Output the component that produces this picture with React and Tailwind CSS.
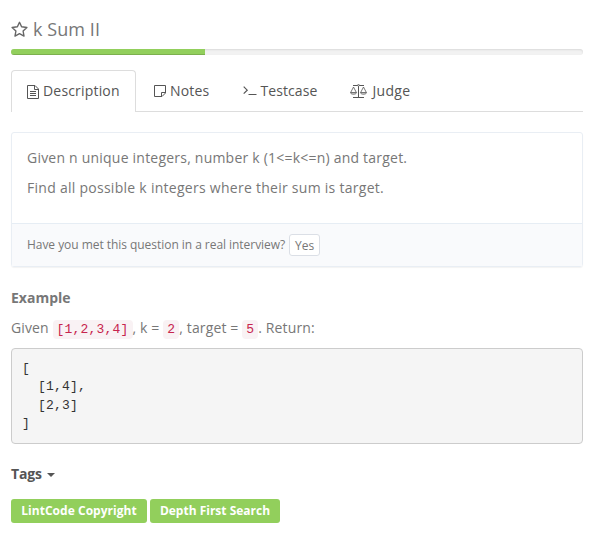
import React from "react";

function StarIcon() {
  return (
    <svg className="h-[17px] w-[17px] shrink-0 text-[#666]" viewBox="0 0 17 17" fill="none" stroke="currentColor" strokeWidth="1.4" strokeLinejoin="round">
      <path d="M8.5 1.3 10.6 5.8 15.9 6.5 12.1 10 13 15.1 8.5 12.7 4 15.1 4.9 10 1.1 6.5 6.4 5.8Z" />
    </svg>
  );
}

function FileIcon() {
  return (
    <svg className="mt-0.5 h-[14px] w-3 shrink-0" viewBox="0 0 12 14" fill="none" stroke="currentColor">
      <path d="M.5.5H8L11.5 4V13.5H.5ZM7.5.5V4.5H11.5M3 6.5H9M3 8.5H9M3 10.5H9" />
    </svg>
  );
}

function NoteIcon() {
  return (
    <svg className="h-3 w-3 shrink-0" viewBox="0 0 12 12" fill="none" stroke="currentColor">
      <path d="M.5.5H11.5V8L8 11.5H.5ZM11.5 7.5H7.5V11.5" />
    </svg>
  );
}

function TerminalIcon() {
  return (
    <svg className="h-[11px] w-[14px] shrink-0" viewBox="0 0 14 11" fill="none" stroke="currentColor">
      <path d="M.7 1.7 4.2 5.2.7 8.7" strokeWidth="1.2" />
      <path d="M5.5 9.5H13.5" />
    </svg>
  );
}

function ScaleIcon() {
  return (
    <svg className="mt-px h-[14px] w-[17px] shrink-0" viewBox="0 0 17 14" fill="none" stroke="currentColor" strokeWidth=".8">
      <path d="M3 1.5H14M8.5 2V13.5M3 13.5H14" strokeWidth="1" />
      <circle cx="8.5" cy="1.3" r=".9" fill="white" />
      <path d="M3.5 3 .8 8.2M3.5 3 6.2 8.2M13.5 3 10.8 8.2M13.5 3 16.2 8.2" />
      <path d="M.4 8.5H6.6C6.3 10.8.7 10.8.4 8.5ZM10.4 8.5H16.6C16.3 10.8 10.7 10.8 10.4 8.5Z" fill="currentColor" fillOpacity=".25" />
    </svg>
  );
}

function Code({ children }) {
  return (
    <code className="rounded bg-[#f9f2f4] px-1 py-0.5 font-['Liberation_Mono',monospace] text-[13px] tracking-[0.2px] text-[#c7254e]">
      {children}
    </code>
  );
}

export default function App() {
  return (
    <main className="flex h-[540px] w-[595px] flex-col overflow-hidden bg-white pr-3 pl-[11px] font-['Open_Sans',sans-serif] text-sm text-[#777]">
      <h1 className="mt-[17px] flex h-6 items-center gap-[5px] text-lg leading-6 tracking-[0.08px]">
        <StarIcon />
        <span>k Sum II</span>
      </h1>
      <div className="mt-2 h-1.5 shrink-0 overflow-hidden rounded-[3px] bg-[#f2f2f2] shadow-[inset_0_1px_2px_rgba(0,0,0,0.1)]">
        <div className="h-full w-[194px] bg-[#92cf5c] shadow-[inset_0_-1px_0_rgba(0,0,0,0.15)]" />
      </div>

      <nav className="mt-[15px] flex h-[42px] shrink-0 border-b border-[#ddd] tracking-[0.18px] text-[#555]">
        <div className="-mb-px flex w-[125px] items-center gap-1 rounded-t border border-b-0 border-[#ddd] bg-white pb-0.5 pl-[15px]">
          <FileIcon />
          <span>Description</span>
        </div>
        <div className="ml-[18px] flex items-center gap-1">
          <NoteIcon />
          <span>Notes</span>
        </div>
        <div className="ml-[34px] flex items-center gap-[3px]">
          <TerminalIcon />
          <span className="tracking-[0.1px]">Testcase</span>
        </div>
        <div className="ml-[33px] flex items-center gap-[5px]">
          <ScaleIcon />
          <span className="tracking-[0.3px]">Judge</span>
        </div>
      </nav>

      <section className="mt-5 flex h-[135px] shrink-0 flex-col rounded-[3px] border border-[#e9eef4] shadow-[0_1px_1px_rgba(0,0,0,0.05)]">
        <div className="h-[90px] px-[15px] pt-[15px] leading-5">
          <p className="mb-2.5 tracking-[0.215px]">Given n unique integers, number k (1&lt;=k&lt;=n) and target.</p>
          <p className="tracking-[0.27px]">Find all possible k integers where their sum is target.</p>
        </div>
        <footer className="flex flex-1 items-center gap-1 border-t border-[#e6edf4] bg-[#f9fafc] px-[15px] text-xs">
          <span className="tracking-[-0.045px]">Have you met this question in a real interview?</span>
          <button className="h-[22px] w-[31px] rounded-[3px] border border-[#dbdfe6] bg-white pt-px text-center text-xs leading-5">Yes</button>
        </footer>
      </section>

      <h2 className="mt-[21px] h-5 font-bold leading-5">Example</h2>
      <p className="mt-2.5 h-5 leading-5 tracking-[0.13px]">
        Given <Code>[1,2,3,4]</Code>, k = <Code>2</Code>, target = <Code>5</Code>. Return:
      </p>
      <pre className="mt-2.5 h-24 shrink-0 rounded border border-[#ccc] bg-[#f5f5f5] px-[10px] pt-[10.5px] font-['Liberation_Mono',monospace] text-[13px] leading-[18.5px] tracking-[0.2px] text-[#333]">{`[
  [1,4],
  [2,3]
]`}</pre>

      <h2 className="mt-5 flex h-5 items-center font-bold leading-5 text-[#555]">
        <span className="tracking-[-0.15px]">Tags</span>
        <svg className="ml-[5px] mt-0.5 h-1 w-2" viewBox="0 0 8 4" fill="currentColor"><path d="M0 0H8L4 4Z" /></svg>
      </h2>
      <div className="mt-[15px] flex h-6 gap-[3px] text-xs font-bold leading-6 text-white">
        <span className="w-[136px] rounded-[3px] bg-[#92cf5c] text-center tracking-[0.03px]">LintCode Copyright</span>
        <span className="w-[130px] rounded-[3px] bg-[#92cf5c] text-center">Depth First Search</span>
      </div>
    </main>
  );
}
